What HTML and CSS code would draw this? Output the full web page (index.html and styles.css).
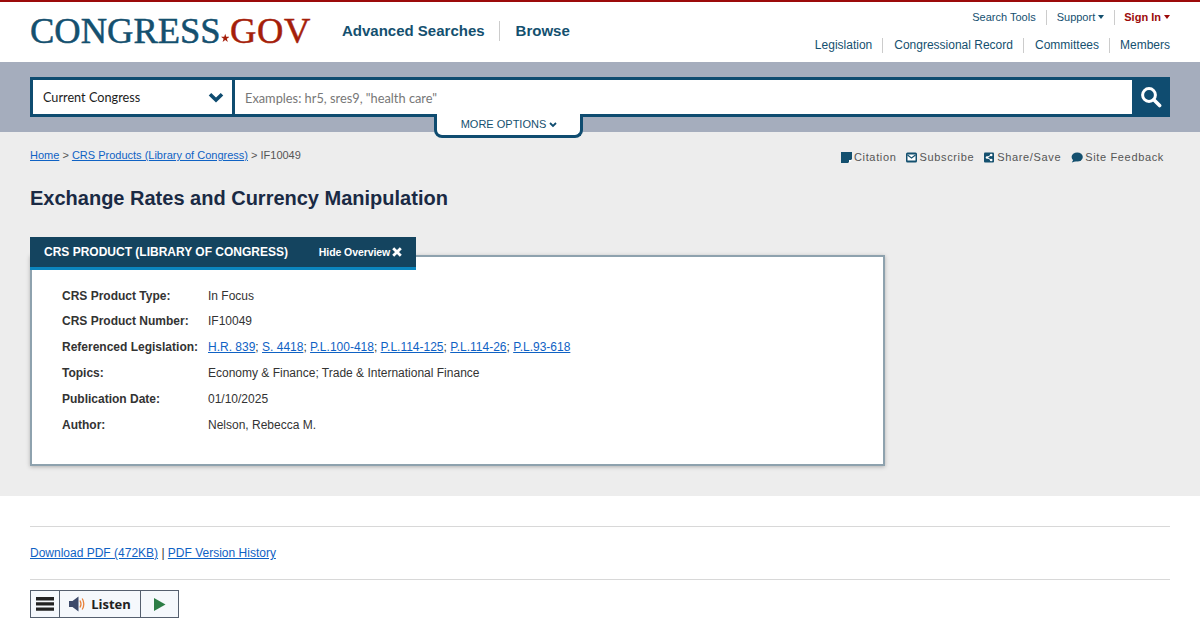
FILE: index.html
```html
<!DOCTYPE html>
<html lang="en">
<head>
    <meta charset="UTF-8">
    <meta name="viewport" content="width=device-width, initial-scale=1.0">
    <title>Exchange Rates and Currency Manipulation</title>
    <link rel="stylesheet" href="styles.css">
</head>
<body>
    <header class="site-header">
        <div class="brand">
            <a class="logo" href="#"><span class="logo-blue">CONGRESS</span><svg class="logo-star" viewBox="0 0 10 10" width="10" height="10"><polygon points="5,0 6.2,3.6 10,3.6 6.9,5.9 8.1,9.6 5,7.3 1.9,9.6 3.1,5.9 0,3.6 3.8,3.6" fill="#a51e0a"/></svg><span class="logo-red">GOV</span></a>
            <nav class="main-nav">
                <a href="#">Advanced Searches</a>
                <a href="#">Browse</a>
            </nav>
        </div>
        <div class="header-links">
            <div class="util-nav">
                <a href="#">Search Tools</a>
                <a href="#">Support <span class="caret"></span></a>
                <a href="#" class="sign-in">Sign In <span class="caret"></span></a>
            </div>
            <div class="section-nav">
                <a href="#">Legislation</a>
                <a href="#">Congressional Record</a>
                <a href="#">Committees</a>
                <a href="#">Members</a>
            </div>
        </div>
    </header>

    <div class="search-band">
        <form class="search-box">
            <div class="search-select">
                <span>Current Congress</span>
                <svg width="16" height="11" viewBox="0 0 16 11"><path d="M2 2.2 L8 8 L14 2.2" fill="none" stroke="#0f4c70" stroke-width="3.6"/></svg>
            </div>
            <div class="search-input">Examples: hr5, sres9, "health care"</div>
            <div class="search-button">
                <svg width="22" height="22" viewBox="0 0 22 22"><circle cx="9" cy="9" r="6.4" fill="none" stroke="#fff" stroke-width="3"/><path d="M13.8 13.8 L19.6 19.6" stroke="#fff" stroke-width="3.6" stroke-linecap="round"/></svg>
            </div>
            <div class="more-options">MORE OPTIONS <svg width="8" height="6" viewBox="0 0 8 6"><path d="M1 1 L4 4 L7 1" fill="none" stroke="#0f4c70" stroke-width="1.8"/></svg></div>
        </form>
    </div>

    <main class="content">
        <div class="top-row">
            <div class="breadcrumb"><a href="#">Home</a> &gt; <a href="#">CRS Products (Library of Congress)</a> &gt; IF10049</div>
            <div class="actions">
                <span class="action"><svg width="11" height="11" viewBox="0 0 11 11"><path d="M0 0 H11 V7 L7 11 H0 Z" fill="#14506f"/><path d="M8 8 H11 L8 11 Z" fill="#fff"/></svg>Citation</span>
                <span class="action"><svg width="11" height="11" viewBox="0 0 11 11"><rect width="11" height="10" y="0.5" rx="1.5" fill="#14506f"/><rect x="1.5" y="2.5" width="8" height="6" fill="#fff"/><path d="M1.5 3 L5.5 6 L9.5 3" fill="none" stroke="#14506f" stroke-width="1.2"/></svg>Subscribe</span>
                <span class="action"><svg width="11" height="11" viewBox="0 0 11 11"><rect width="10" height="10" y="0.5" rx="1" fill="#14506f"/><path d="M7.2 3 L3 5.5 L7.2 8" fill="none" stroke="#fff"/><circle cx="7.2" cy="3" r="1.3" fill="#fff"/><circle cx="3" cy="5.5" r="1.3" fill="#fff"/><circle cx="7.2" cy="8" r="1.3" fill="#fff"/></svg>Share/Save</span>
                <span class="action"><svg width="12" height="11" viewBox="0 0 12 11"><ellipse cx="6.2" cy="5" rx="5.6" ry="4.5" fill="#14506f"/><path d="M2.5 7.5 L0.8 10.6 L5.5 9 Z" fill="#14506f"/></svg>Site Feedback</span>
            </div>
        </div>
        <h1 class="page-title">Exchange Rates and Currency Manipulation</h1>

        <div class="overview-tab">
            <span class="tab-title">CRS PRODUCT (LIBRARY OF CONGRESS)</span>
            <span class="tab-hide">Hide Overview <svg class="tab-x" width="10" height="10" viewBox="0 0 10 10"><path d="M1.2 1.2 L8.8 8.8 M8.8 1.2 L1.2 8.8" stroke="#fff" stroke-width="2.8"/></svg></span>
        </div>
        <div class="overview">
            <table class="overview-table">
                <tr><th>CRS Product Type:</th><td>In Focus</td></tr>
                <tr><th>CRS Product Number:</th><td>IF10049</td></tr>
                <tr><th>Referenced Legislation:</th><td><a href="#">H.R. 839</a>; <a href="#">S. 4418</a>; <a href="#">P.L.100-418</a>; <a href="#">P.L.114-125</a>; <a href="#">P.L.114-26</a>; <a href="#">P.L.93-618</a></td></tr>
                <tr><th>Topics:</th><td>Economy &amp; Finance; Trade &amp; International Finance</td></tr>
                <tr><th>Publication Date:</th><td>01/10/2025</td></tr>
                <tr><th>Author:</th><td>Nelson, Rebecca M.</td></tr>
            </table>
        </div>
    </main>

    <section class="below">
        <div class="downloads"><a href="#">Download PDF (472KB)</a> | <a href="#">PDF Version History</a></div>
        <div class="listen-bar">
            <span class="listen-cell listen-menu"><svg width="18" height="14" viewBox="0 0 18 14"><path d="M0 0 H18 V3.4 H0 Z M0 5.2 H18 V8.6 H0 Z M0 10.4 H18 V13.8 H0 Z" fill="#222"/></svg></span>
            <span class="listen-cell listen-label"><svg width="18" height="16" viewBox="0 0 18 16"><path d="M0 5 H3.5 L9.5 0.5 V15.5 L3.5 11 H0 Z" fill="#3d4a6b"/><path d="M11 4.5 Q13 8 11 11.5" fill="none" stroke="#e8823c" stroke-width="1.3"/><path d="M13.2 2.5 Q16.4 8 13.2 13.5" fill="none" stroke="#e8823c" stroke-width="1.3"/></svg>Listen</span>
            <span class="listen-cell listen-play"><svg width="12" height="13" viewBox="0 0 12 13"><polygon points="0,0 11.5,6.5 0,13" fill="#2c7d46"/></svg></span>
        </div>
    </section>
</body>
</html>
```

FILE: styles.css
```css
body {
    font-family: "Liberation Sans", Arial, sans-serif;
    background-color: #fff;
    color: #333;
    margin: 0;
    padding: 0;
}
a {
    color: #0f62c4;
}
.site-header {
    height: 60px;
    border-top: 2px solid #9c0a0a;
    padding: 0 30px;
    display: flex;
    justify-content: space-between;
}
.brand {
    display: flex;
    align-items: flex-start;
}
.logo {
    display: flex;
    align-items: baseline;
    width: 281px;
    margin-top: 8px;
    font-family: "Liberation Serif", serif;
    font-size: 36.5px;
    line-height: 42px;
    text-decoration: none;
    white-space: nowrap;
    -webkit-text-stroke: 0.5px;
}
.logo-blue {
    color: #14506f;
}
.logo-red {
    color: #a51e0a;
    letter-spacing: 0.6px;
}
.logo-star {
    margin: 0 1px 0 0;
}
.main-nav {
    display: flex;
    margin: 19px 0 0 31px;
}
.main-nav a {
    color: #14506f;
    font-size: 15px;
    font-weight: bold;
    line-height: 20px;
    text-decoration: none;
}
.main-nav a + a {
    border-left: 1px solid #ccc;
    margin-left: 14px;
    padding-left: 16px;
}
.header-links {
    display: flex;
    flex-direction: column;
    align-items: flex-end;
}
.util-nav {
    display: flex;
    margin-top: 8px;
}
.section-nav {
    display: flex;
    margin-top: 13px;
}
.util-nav a,
.section-nav a {
    color: #14506f;
    text-decoration: none;
    white-space: nowrap;
}
.util-nav a {
    font-size: 11px;
    line-height: 15px;
}
.section-nav a {
    font-size: 12px;
    line-height: 15px;
}
.util-nav a + a {
    border-left: 1px solid #ccc;
    margin-left: 10px;
    padding-left: 10px;
}
.util-nav a.sign-in {
    padding-left: 9px;
}
.section-nav a + a {
    border-left: 1px solid #ccc;
    margin-left: 10px;
    padding-left: 11px;
}
.section-nav a:last-child {
    padding-left: 10px;
}
.util-nav .sign-in {
    color: #9c0a0a;
    font-weight: bold;
}
.caret {
    display: inline-block;
    border-top: 4px solid currentColor;
    border-left: 3.5px solid transparent;
    border-right: 3.5px solid transparent;
    vertical-align: 2px;
}
.search-band {
    background-color: #a5adbd;
    height: 70px;
    padding: 15px 30px 0;
    box-sizing: border-box;
}
.search-box {
    position: relative;
    display: flex;
    height: 40px;
    box-sizing: border-box;
    border: 3px solid #0f4c70;
    background-color: #fff;
    margin: 0;
}
.search-select {
    width: 202px;
    box-sizing: border-box;
    padding: 0 8px 0 10px;
    border-right: 3px solid #0f4c70;
    display: flex;
    align-items: center;
    justify-content: space-between;
    font-family: Lato, sans-serif;
    font-size: 12.7px;
    color: #1c1c1c;
}
.search-input {
    flex: 1;
    padding: 2px 0 0 10px;
    display: flex;
    align-items: center;
    font-family: Lato, sans-serif;
    font-size: 12.8px;
    color: #777;
}
.search-button {
    width: 38px;
    margin: -3px -3px -3px 0;
    background-color: #0f4c70;
    display: flex;
    align-items: center;
    justify-content: center;
}
.more-options {
    position: absolute;
    left: 401px;
    top: 34px;
    width: 149px;
    height: 24px;
    box-sizing: border-box;
    padding-left: 1px;
    background-color: #fff;
    border: 3px solid #0f4c70;
    border-top: none;
    border-radius: 0 0 8px 8px;
    text-align: center;
    font-size: 11px;
    line-height: 20px;
    color: #14506f;
}
.content {
    background-color: #ededed;
    height: 364px;
    padding: 0 30px;
    box-sizing: border-box;
}
.top-row {
    display: flex;
    justify-content: space-between;
    padding-top: 17px;
}
.breadcrumb {
    font-size: 11px;
    line-height: 13px;
    color: #555;
}
.actions {
    display: flex;
    gap: 10px;
    padding-right: 6px;
    margin-top: 1px;
}
.action {
    display: flex;
    align-items: center;
    gap: 2px;
    font-size: 11px;
    line-height: 14px;
    letter-spacing: 0.65px;
    color: #555;
}
.page-title {
    margin: 21px 0 0;
    font-size: 20px;
    line-height: 26px;
    color: #1a2a44;
}
.overview-tab {
    position: relative;
    width: 386px;
    height: 33px;
    margin-top: 26px;
    box-sizing: border-box;
    background-color: #14445f;
    border-bottom: 3px solid #0b86bf;
    padding: 0 14px;
    display: flex;
    justify-content: space-between;
    align-items: center;
    color: #fff;
}
.tab-title {
    font-size: 12px;
    font-weight: bold;
}
.tab-hide {
    font-size: 10.5px;
    font-weight: bold;
    letter-spacing: -0.08px;
    margin-bottom: 1px;
}
.tab-x {
    margin-left: -1px;
    vertical-align: -1px;
}
.overview {
    margin-top: -15px;
    width: 855px;
    height: 211px;
    box-sizing: border-box;
    background-color: #fff;
    border: 2px solid #8ea2ae;
    box-shadow: 0 1px 4px rgba(0, 0, 0, 0.25);
    padding: 26px 0 0 30px;
}
.overview-table {
    border-collapse: collapse;
    font-size: 12px;
}
.overview-table th,
.overview-table td {
    padding: 0;
    height: 26px;
    text-align: left;
    vertical-align: middle;
    color: #333;
}
.overview-table tr:first-child th,
.overview-table tr:first-child td {
    height: 25px;
}
.overview-table th {
    width: 146px;
}
.below {
    margin: 30px 30px 0;
    border-top: 1px solid #d8d8d8;
}
.downloads {
    font-size: 12px;
    line-height: 14px;
    padding: 19px 0;
    border-bottom: 1px solid #d8d8d8;
}
.listen-bar {
    display: inline-flex;
    margin-top: 10px;
    height: 28px;
    box-sizing: border-box;
    border: 1px solid #555f6e;
    background-color: #f5f8fc;
}
.listen-cell {
    display: flex;
    align-items: center;
    justify-content: center;
}
.listen-menu {
    width: 28px;
    border-right: 1px solid #555f6e;
}
.listen-label {
    width: 80px;
    gap: 4px;
    border-right: 1px solid #555f6e;
    font-family: "Open Sans", sans-serif;
    font-size: 13px;
    font-weight: bold;
    color: #222;
}
.listen-play {
    width: 37px;
}
```
